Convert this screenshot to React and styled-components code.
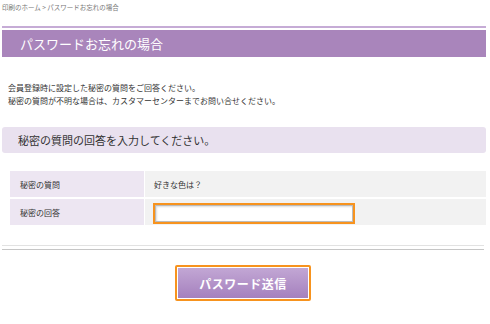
import React from "react";
import styled, { createGlobalStyle } from "styled-components";

const Global = createGlobalStyle`
  html, body { margin: 0; padding: 0; background: #fff; }
  body { font-family: "Noto Sans CJK JP", "Noto Sans", sans-serif; color: #333; }
`;

const Page = styled.div`
  width: 484px;
  margin-left: 2px;
`;

const Breadcrumb = styled.div`
  font-size: 6.5px;
  line-height: 10px;
  color: #777;
  padding-top: 2px;
  height: 24px;
  white-space: nowrap;
`;

const TitleWrap = styled.div`
  border-top: 2px solid #c6acd6;
  padding-top: 2px;
`;

const TitleBar = styled.h1`
  margin: 0;
  height: 27px;
  background: #a985bb;
  color: #fff;
  font-size: 13px;
  font-weight: normal;
  line-height: 27px;
  padding-left: 18px;
`;

const Description = styled.p`
  margin: 24px 0 0;
  padding-left: 6px;
  font-size: 8px;
  line-height: 13px;
  color: #333;
`;

const SectionHead = styled.h2`
  margin: 20px 0 0;
  height: 26px;
  background: #e9e1ef;
  border-radius: 3px;
  font-size: 11px;
  font-weight: normal;
  line-height: 26px;
  padding-left: 16px;
  color: #333;
`;

const Table = styled.div`
  margin: 18px 0 0 8px;
  display: grid;
  grid-template-columns: 134px 1fr;
  column-gap: 1px;
  row-gap: 2px;
`;

const Label = styled.div`
  background: #ede6f2;
  height: 26px;
  display: flex;
  align-items: center;
  padding-left: 10px;
  font-size: 8px;
  color: #333;
`;

const Value = styled.div`
  background: #f2f2f2;
  height: 26px;
  display: flex;
  align-items: center;
  padding-left: 9px;
  font-size: 8px;
  color: #333;
`;

const Input = styled.input`
  box-sizing: border-box;
  width: 198px;
  height: 17px;
  margin: 2px 0 0 1px;
  border: 1px solid #bbb;
  outline: 2px solid #f7931e;
  outline-offset: 0;
  background: #fff;
  box-shadow: inset 1px 1px 2px #ddd;
  font-size: 8px;
  padding: 0 3px;
`;

const Separator = styled.div`
  margin-top: 20px;
  height: 3px;
  border-top: 1px solid #e2e2e2;
  border-bottom: 1px solid #c6c6c6;
  margin-right: 2px;
`;

const ButtonRow = styled.div`
  display: flex;
  justify-content: center;
  margin-top: 15px;
`;

const SubmitButton = styled.button`
  box-sizing: border-box;
  width: 136px;
  height: 36px;
  border: 2px solid #f7931e;
  border-radius: 2px;
  box-shadow: inset 0 0 0 1px #fff;
  background: linear-gradient(#c3a8d5, #a47fbd);
  color: #fff;
  font-family: "Noto Sans CJK JP", sans-serif;
  font-size: 12px;
  font-weight: bold;
  letter-spacing: 0.5px;
  margin-left: -2px;
  cursor: pointer;
`;

export default function App() {
  return (
    <>
      <Global />
      <Page>
        <Breadcrumb>印刷のホーム &gt; パスワードお忘れの場合</Breadcrumb>
        <TitleWrap>
          <TitleBar>パスワードお忘れの場合</TitleBar>
        </TitleWrap>
        <Description>
          会員登録時に設定した秘密の質問をご回答ください。
          <br />
          秘密の質問が不明な場合は、カスタマーセンターまでお問い合せください。
        </Description>
        <SectionHead>秘密の質問の回答を入力してください。</SectionHead>
        <Table>
          <Label>秘密の質問</Label>
          <Value>好きな色は？</Value>
          <Label>秘密の回答</Label>
          <Value>
            <Input type="text" />
          </Value>
        </Table>
        <Separator />
        <ButtonRow>
          <SubmitButton>パスワード送信</SubmitButton>
        </ButtonRow>
      </Page>
    </>
  );
}
